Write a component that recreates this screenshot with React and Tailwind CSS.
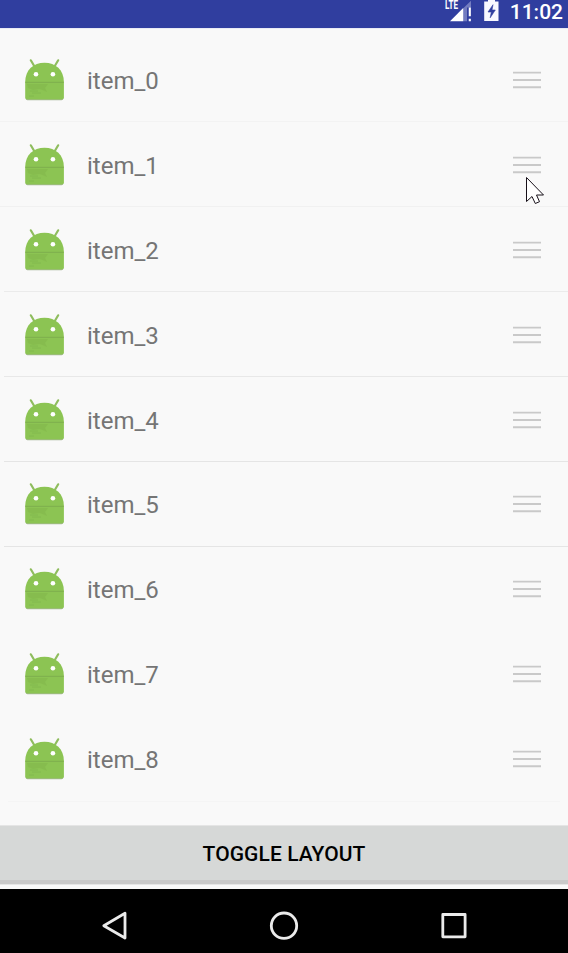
import React from "react";

const rows = [
  { name: "item_0", divider: "border-[#f3f3f3]", inset: "" },
  { name: "item_1", divider: "border-[#f1f1f1]", inset: "" },
  { name: "item_2", divider: "border-[#ebebeb]", inset: "ml-1" },
  { name: "item_3", divider: "border-[#e8e8e8]", inset: "ml-1" },
  { name: "item_4", divider: "border-[#e5e5e5]", inset: "ml-1" },
  { name: "item_5", divider: "border-[#e5e5e5]", inset: "ml-1" },
  { name: "item_6", divider: "border-[#f9f9f9]", inset: "" },
  { name: "item_7", divider: "border-[#f9f9f9]", inset: "" },
  { name: "item_8", divider: "border-[#f5f5f5]", inset: "mx-2" },
];

function Robot() {
  return (
    <svg className="block h-[44px] w-[42px] shrink-0" viewBox="0 0 42 44">
      <path d="M2.6 40.3Q2.6 42.3 4.4 42.3H38.6Q40.4 42.3 40.4 40.3Z" fill="#a9b79b" />
      <g stroke="#8fbd5e" strokeWidth="2.2" strokeLinecap="round">
        <path d="M7.8 2.3L11.8 9" />
        <path d="M35.2 2.3L31.2 9" />
      </g>
      <path
        d="M2.2 24C2.2 12 10.5 4.8 21.5 4.8S40.9 12 40.9 24V39.5Q40.9 41.5 38.9 41.5H4.2Q2.2 41.5 2.2 39.5Z"
        fill="#8cc453"
      />
      <path d="M2.4 24.4H40.7" stroke="#80b24e" strokeWidth="1.1" />
      <path d="M4 26H25L22 30L24 34L17 31L10 32L5 30Z" fill="#84ba4e" opacity=".8" />
      <path d="M7 33H15M9 35H18M6 38H11" stroke="#82b84e" strokeWidth=".8" />
      <circle cx="13" cy="16.3" r="2.3" fill="#fff" />
      <circle cx="29.9" cy="16.3" r="2.3" fill="#fff" />
    </svg>
  );
}

function Handle() {
  return (
    <svg className="block h-[18px] w-7" viewBox="0 0 28 18" stroke="#c9c9c9" strokeWidth="1.9">
      <path d="M0 1.6H28M0 9H28M0 16.2H28" />
    </svg>
  );
}

function StatusBar() {
  return (
    <header className="flex h-7 shrink-0 justify-end bg-[#303e9f] pr-[5px]">
      <svg className="h-7 w-[34px]" viewBox="0 0 34 28">
        <path d="M30 .8V7.5H26V21.2H22V8.5Z" fill="#737cc0" />
        <path d="M22.2 8V21.2H9Z" fill="#fff" />
        <path d="M28.8 7.5V16.3M28.8 18.7V21.2" stroke="#fff" strokeWidth="2.1" />
        <text x="4" y="9.3" textLength="13" lengthAdjust="spacingAndGlyphs" fill="#fff" className="font-['Roboto'] text-[12px] font-bold">LTE</text>
      </svg>
      <svg className="ml-[9px] h-7 w-[16px]" viewBox="0 0 16 28">
        <path d="M4 0H11V1.5H14.5V21H.2V1.5H4Z" fill="#f8f8ff" />
        <path d="M9 4.7L4 12H7.3L6.2 17.8L11.3 10H8Z" fill="#303e9f" stroke="#303e9f" strokeWidth=".6" />
      </svg>
      <div className="ml-[8px] w-[55px] text-right text-[21px] leading-[24px] font-medium text-white">11:02</div>
    </header>
  );
}

export default function App() {
  return (
    <div className="relative flex h-[953px] w-[568px] flex-col overflow-hidden bg-[#f9f9f9] font-['Roboto',sans-serif]">
      <StatusBar />
      <main className="h-[797px] shrink-0 border-t border-[#e9eaf4] pt-[8.5px]">
        {rows.map((row) => (
          <div key={row.name} className="flex h-[84.9px] flex-col">
            <div className="flex min-h-0 flex-1 items-center pt-[1.2px] pr-[27px] pl-[23px]">
              <Robot />
              <span className="ml-[22px] flex-1 pt-[2px] text-[24px] leading-7 text-[#757575]">{row.name}</span>
              <Handle />
            </div>
            <div className={`border-t ${row.divider} ${row.inset}`} />
          </div>
        ))}
      </main>
      <button className="h-[59px] shrink-0 border-t border-b-4 border-[#e5e5e5] border-b-[#c9c9c9] bg-[#d6d8d7] pt-[2px] text-[21px] leading-[52px] font-medium tracking-[0.08px] text-black">
        TOGGLE LAYOUT
      </button>
      <div className="h-[5px] shrink-0 border-t border-[#e6e6e6] bg-[#f9f9f9]" />
      <nav className="flex flex-1 items-center bg-black">
        <svg className="h-full w-full" viewBox="0 0 568 64" fill="none" stroke="#ebebeb" strokeWidth="2.8" strokeLinejoin="round">
          <path d="M103.8 36.7L125 24.3V49Z" />
          <circle cx="284" cy="36.7" r="12.7" />
          <rect x="442.8" y="25.5" width="22.3" height="22.3" />
        </svg>
      </nav>
      <svg className="absolute top-[176px] left-[525px] h-[30px] w-[22px]" viewBox="0 0 22 30">
        <path d="M1.5 1.5V25.5L7 20.5L10.3 27.5L14.5 25.7L11.5 19H18.5Z" fill="#fff" stroke="#171019" strokeWidth="1" />
      </svg>
    </div>
  );
}
